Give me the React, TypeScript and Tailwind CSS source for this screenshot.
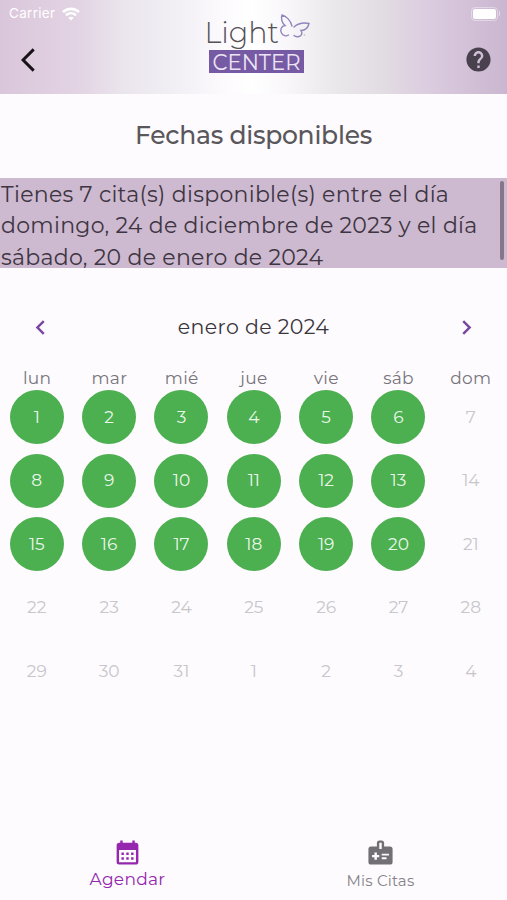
import {
  MdArrowBackIosNew,
  MdCalendarMonth,
  MdChevronLeft,
  MdChevronRight,
  MdHelp,
  MdMedicalInformation,
} from "react-icons/md";

type CalendarDay = {
  day: number;
  available: boolean;
};

const weekdays = ["lun", "mar", "mié", "jue", "vie", "sáb", "dom"];

const days: CalendarDay[] = Array.from({ length: 35 }, (_, i) => ({
  day: i < 31 ? i + 1 : i - 30,
  available: i < 20 && i % 7 !== 6,
}));

function Logo() {
  return (
    <svg width="112" height="66" viewBox="0 0 112 66" className="font-[Montserrat,Lato,sans-serif]">
      <text x="4.500" y="34.500" fontSize="30" fontWeight="300" fill="#555157" textLength="74.500" lengthAdjust="spacingAndGlyphs">
        Light
      </text>
      <rect x="9" y="42" width="95" height="23" fill="#765aa3" />
      <text x="12.500" y="61.500" fontSize="22" fontWeight="400" fill="#ece4f4" textLength="88" lengthAdjust="spacingAndGlyphs">
        CENTER
      </text>
      <g fill="none" stroke="#8f86bd" strokeWidth="1.400" strokeLinecap="round">
        <path d="M92 18C90.500 12 86 8 82 7C80.500 10 82 15 85 17.500C81 18 80 22 81.500 25C83 28 86 28.500 88.500 27" />
        <path d="M94 19C98 15.500 104 14.500 109 15.500C108 20 105 22.500 101 22.500C103 25 101.500 28 99 28.500C97 29 95 28.500 94 27.500" />
      </g>
      <circle cx="104.500" cy="27" r="0.800" fill="#b9b3d3" />
    </svg>
  );
}

function Header() {
  return (
    <header className="relative h-[94px] bg-[linear-gradient(90deg,#dac6db_0%,#e2d3e3_15%,#ebe6ed_25%,#f1eef4_34%,#fcfafd_44%,#ffffff_50%,#f8f6f9_57%,#ebe8ec_66%,#e2dde3_75%,#dccde0_84%,#cab6d0_100%)]">
      <div className="flex h-[27px] items-center px-[9px] text-white">
        <span className="font-[Inter,sans-serif] text-[13.500px] tracking-[0.3px]">Carrier</span>
        <svg width="18" height="14" viewBox="0 0 18 14" className="ml-[7px]" fill="none" stroke="white" strokeWidth="2.600">
          <path d="M1 5.200C5.500 0.700 12.500 0.700 17 5.200M4 8.300C7 5.500 11 5.500 14 8.300" />
          <path d="M9 13.500L6.300 10.700C8 9.500 10 9.500 11.700 10.700Z" fill="white" stroke="none" />
        </svg>
        <div className="mr-[-2px] ml-auto flex items-center">
          <div className="h-[14px] w-[27px] rounded-[4px] border border-white/40 p-[1px]">
            <div className="h-full w-[23px] rounded-[2px] bg-white" />
          </div>
          <div className="ml-px h-[5px] w-px rounded-r bg-white/50" />
        </div>
      </div>

      <div className="flex h-[65px] items-center justify-between pr-[14px] pl-[14px]">
        <MdArrowBackIosNew size={28} className="text-[#161217]" />
        <MdHelp size={29} className="text-[#49414d]" />
      </div>

      {/* Logo sits over both header rows */}
      <div className="absolute top-[8px] left-[200px]">
        <Logo />
      </div>
    </header>
  );
}

function Notice() {
  return (
    <div className="relative h-[90px] bg-[#cdb9d0] text-[22px] leading-[31.700px] whitespace-nowrap text-[#3d3541]">
      <div className="pt-[0.500px] pl-px">
        <p className="tracking-[0.300px]">Tienes 7 cita(s) disponible(s) entre el día</p>
        <p className="tracking-[0.300px]">domingo, 24 de diciembre de 2023 y el día</p>
        <p className="tracking-[0.300px]">sábado, 20 de enero de 2024</p>
      </div>
      <div className="absolute top-[3px] right-[3px] h-[79px] w-[4px] rounded-full bg-[#857689]" />
    </div>
  );
}

function Calendar() {
  return (
    <section className="flex-1">
      <div className="mt-[43px] flex h-8 items-center justify-between px-[26px] text-[#7a45a0]">
        <MdChevronLeft size={29} />
        <h2 className="text-[20.500px] tracking-[0.400px] text-[#39363c]">enero de 2024</h2>
        <MdChevronRight size={29} />
      </div>

      <div className="mt-[23px] grid h-[24px] grid-cols-7 items-center pl-px text-center text-[17px] text-[#77747a]">
        {weekdays.map((name) => (
          <span key={name} className="tracking-[0.3px]">{name}</span>
        ))}
      </div>

      <div className="grid auto-rows-[63.500px] grid-cols-7 justify-items-center pl-[0.600px] text-[17px]">
        {days.map((item, i) => (
          <div
            key={i}
            className={
              item.available
                ? "flex size-[54px] items-center justify-center rounded-full bg-[#4caf50] pt-px text-[#e9f7ea]"
                : "flex size-[54px] items-center justify-center pt-px text-[#c8c6cb]"
            }
          >
            {item.day}
          </div>
        ))}
      </div>
    </section>
  );
}

function BottomNav() {
  return (
    <nav className="grid h-[67px] grid-cols-2 pl-px">
      <button className="flex flex-col items-center pt-[5px] text-[#9427ae]">
        <MdCalendarMonth size={29} />
        <span className="text-[17px] leading-6 tracking-[0.3px]">Agendar</span>
      </button>
      <button className="flex flex-col items-center pt-[5px] text-[#737075]">
        <MdMedicalInformation size={29} />
        <span className="mt-[2px] text-[15px] leading-6 tracking-[0.2px] text-[#858287]">Mis Citas</span>
      </button>
    </nav>
  );
}

export default function App() {
  return (
    <div className="flex h-[900px] w-[507px] flex-col overflow-hidden bg-[#fdfbfe] font-[Montserrat,Inter,sans-serif]">
      <Header />
      <h1 className="h-[84px] text-center text-[25px] leading-[83px] font-medium tracking-[-0.250px] text-[#5a575c]">
        Fechas disponibles
      </h1>
      <Notice />
      <Calendar />
      <BottomNav />
    </div>
  );
}
